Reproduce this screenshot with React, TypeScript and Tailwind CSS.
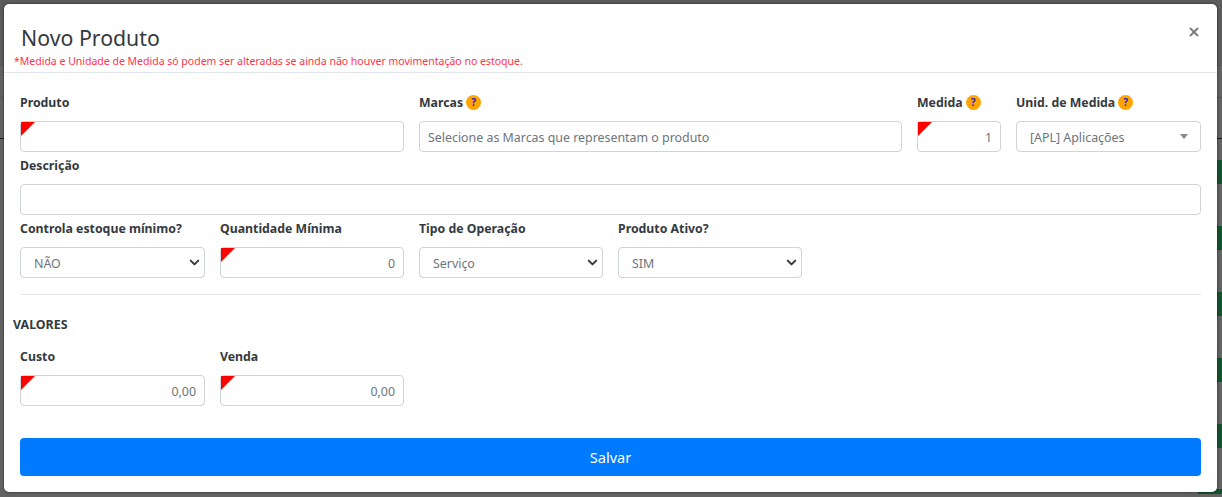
import React from 'react';
import { X, ChevronDown } from 'lucide-react';

const inputBase = 'block w-full h-[31px] rounded-[4px] border border-[#ced4da] bg-white pt-[3px] text-[12.4px] text-[#6c757d]';

const Label = ({ text, help }: { text: string; help?: boolean }) => (
  <div className="flex items-center gap-[3px] h-[20px] text-[12.3px] font-bold text-[#343a40]">
    <span className="pt-[2px]">{text}</span>
    {help && (
      <span className="flex items-center justify-center w-[15px] h-[15px] rounded-full bg-[#ffa500] text-[10px] font-bold text-[#2222cc]">?</span>
    )}
  </div>
);

const Flagged = ({ value }: { value?: string }) => (
  <div className={`relative ${inputBase} flex items-center justify-end px-[8px]`}>
    <div className="absolute left-0 top-0 w-0 h-0 border-t-[14px] border-r-[14px] border-t-[#ff0000] border-r-transparent" />
    {value}
  </div>
);

const Select = ({ value }: { value: string }) => (
  <div className={`${inputBase} flex items-center justify-between pl-[13px] pr-[2px]`}>
    <span>{value}</span>
    <ChevronDown size={15} strokeWidth={3.2} className="-mt-[3px] text-[#343a40]" />
  </div>
);

const Field = ({ label, help, children, className }: { label: string; help?: boolean; children: React.ReactNode; className: string }) => (
  <div className={className}>
    <Label text={label} help={help} />
    <div className="mt-[9px]">{children}</div>
  </div>
);

// dimmed page behind the modal, only its edges show
const Backdrop = () => (
  <div className="absolute inset-0 bg-[#636363]">
    <div className="h-[66px] border-b border-[#555555] bg-[#5c5c5c]" />
    <div className="h-[32px] border-b border-[#555555]" />
    <div className="h-[41px] border-b border-[#1c1c1c]" />
    <div className="flex flex-col items-end pt-[21px] gap-[42px]">
      <div className="h-[24px] w-[5px] bg-[#14532d]" />
      <div className="h-[24px] w-[5px] bg-[#14532d]" />
      <div className="h-[24px] w-[5px] bg-[#14532d]" />
      <div className="h-[24px] w-[5px] bg-[#14532d]" />
      <div className="h-[24px] w-[5px] bg-[#14532d]" />
    </div>
    <div className="mt-[41px] flex justify-end">
      <div className="h-[3px] w-[22px] mr-[26px] rounded-t-full bg-[#0f3d20]" />
      <div className="h-[5px] w-[24px] bg-[#14532d]" />
    </div>
  </div>
);

export default function App() {
  return (
    <div className="relative h-[497px] w-[1222px] overflow-hidden" style={{ fontFamily: '"Noto Sans", "Open Sans", sans-serif' }}>
      <Backdrop />
      <div className="relative p-[4px] pr-[5px]">
        <div className="h-[488px] rounded-[5px] bg-white shadow-[0_0_3px_rgba(0,0,0,0.6)]">
          <div className="relative h-[69px] border-b border-[#e3e6ea]">
            <h4 className="pl-[17px] pt-[18px] text-[21.3px] leading-[32px] text-[#343a40]">Novo Produto</h4>
            <p className="pl-[10px] text-[10.5px] leading-[15px] text-[#ff3347]">*Medida e Unidade de Medida só podem ser alteradas se ainda não houver movimentação no estoque.</p>
            <X size={14} strokeWidth={3.5} className="absolute right-[16px] top-[21px] text-[#808080]" />
          </div>

          <div className="px-[16px] pt-[19px]">
            <div className="flex gap-[15px]">
              <Field label="Produto" className="w-[384px]"><Flagged /></Field>
              <Field label="Marcas" help className="w-[483px]">
                <div className={`${inputBase} flex items-center px-[8px]`}>Selecione as Marcas que representam o produto</div>
              </Field>
              <Field label="Medida" help className="w-[84px]"><Flagged value="1" /></Field>
              <Field label="Unid. de Medida" help className="w-[185px]">
                <div className={`${inputBase} flex items-center justify-between pl-[13px] pr-[12px]`}>
                  <span>[APL] Aplicações</span>
                  <span className="-mt-[3px] w-0 h-0 border-x-[4px] border-t-[5px] border-x-transparent border-t-[#888888]" />
                </div>
              </Field>
            </div>

            <div className="mt-[3px]">
              <Label text="Descrição" />
              <div className={`mt-[9px] ${inputBase}`} />
            </div>

            <div className="mt-[3px] flex gap-[15px]">
              <Field label="Controla estoque mínimo?" className="w-[185px]"><Select value="NÃO" /></Field>
              <Field label="Quantidade Mínima" className="w-[184px]"><Flagged value="0" /></Field>
              <Field label="Tipo de Operação" className="w-[184px]"><Select value="Serviço" /></Field>
              <Field label="Produto Ativo?" className="w-[184px]"><Select value="SIM" /></Field>
            </div>

            <div className="mt-[16px] border-t border-[#e3e6ea]" />

            <div className="-ml-[7px] mt-[19px] h-[20px] pt-[1px] text-[12.4px] leading-[20px] font-bold text-[#343a40]">VALORES</div>

            <div className="mt-[12px] flex gap-[15px]">
              <Field label="Custo" className="w-[185px]"><Flagged value="0,00" /></Field>
              <Field label="Venda" className="w-[184px]"><Flagged value="0,00" /></Field>
            </div>

            <button className="mt-[32px] block h-[38px] w-full rounded-[4px] bg-[#007bff] pt-[2px] text-[14.5px] text-white">Salvar</button>
          </div>
        </div>
      </div>
    </div>
  );
}
